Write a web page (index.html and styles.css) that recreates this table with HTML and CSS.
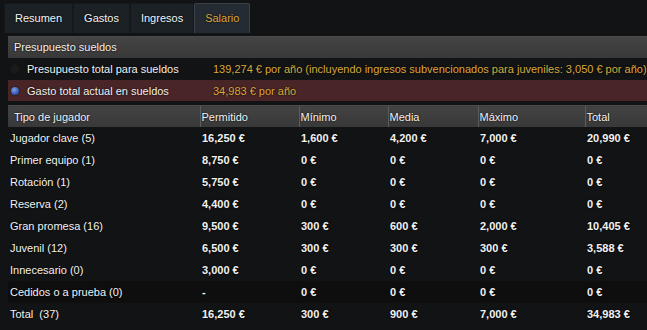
FILE: index.html
```html
<!DOCTYPE html>
<html lang="es">
<head>
<meta charset="utf-8">
<link rel="stylesheet" href="styles.css">
</head>
<body>
<div class="tabs">
  <div class="tab">Resumen</div>
  <div class="tab">Gastos</div>
  <div class="tab">Ingresos</div>
  <div class="tab active">Salario</div>
</div>
<div class="content">
  <div class="panel-head">Presupuesto sueldos</div>
  <div class="info-row">
    <span class="dot off"></span>
    <span class="label">Presupuesto total para sueldos</span>
    <span class="value">139,274 € por año (incluyendo ingresos subvencionados para juveniles: 3,050 € por año)</span>
  </div>
  <div class="info-row warn">
    <span class="dot on"></span>
    <span class="label">Gasto total actual en sueldos</span>
    <span class="value">34,983 € por año</span>
  </div>
  <table class="grid">
    <colgroup>
      <col class="c1"><col class="c2"><col class="c3"><col class="c4"><col class="c5"><col class="c6">
    </colgroup>
    <thead>
      <tr><th class="first">Tipo de jugador</th><th>Permitido</th><th>Mínimo</th><th>Media</th><th>Máximo</th><th>Total</th></tr>
    </thead>
    <tbody>
      <tr><td>Jugador clave (5)</td><td class="n">16,250 €</td><td class="n">1,600 €</td><td class="n">4,200 €</td><td class="n">7,000 €</td><td class="n">20,990 €</td></tr>
      <tr><td>Primer equipo (1)</td><td class="n">8,750 €</td><td class="n">0 €</td><td class="n">0 €</td><td class="n">0 €</td><td class="n">0 €</td></tr>
      <tr><td>Rotación (1)</td><td class="n">5,750 €</td><td class="n">0 €</td><td class="n">0 €</td><td class="n">0 €</td><td class="n">0 €</td></tr>
      <tr><td>Reserva (2)</td><td class="n">4,400 €</td><td class="n">0 €</td><td class="n">0 €</td><td class="n">0 €</td><td class="n">0 €</td></tr>
      <tr><td>Gran promesa (16)</td><td class="n">9,500 €</td><td class="n">300 €</td><td class="n">600 €</td><td class="n">2,000 €</td><td class="n">10,405 €</td></tr>
      <tr><td>Juvenil (12)</td><td class="n">6,500 €</td><td class="n">300 €</td><td class="n">300 €</td><td class="n">300 €</td><td class="n">3,588 €</td></tr>
      <tr><td>Innecesario (0)</td><td class="n">3,000 €</td><td class="n">0 €</td><td class="n">0 €</td><td class="n">0 €</td><td class="n">0 €</td></tr>
      <tr class="dark"><td>Cedidos o a prueba (0)</td><td class="n">-</td><td class="n">0 €</td><td class="n">0 €</td><td class="n">0 €</td><td class="n">0 €</td></tr>
      <tr><td>Total &nbsp;(37)</td><td class="n">16,250 €</td><td class="n">300 €</td><td class="n">900 €</td><td class="n">7,000 €</td><td class="n">34,983 €</td></tr>
    </tbody>
  </table>
</div>
</body>
</html>
```

FILE: styles.css
```css
html, body {
  margin: 0;
  padding: 0;
  background: #121314;
  overflow: hidden;
}
body {
  font-family: "Liberation Sans", Arial, sans-serif;
  font-size: 11px;
  color: #f2f2f2;
  text-shadow: 0 0 2px #000;
}
.tabs {
  display: flex;
  padding: 3px 0 0 4px;
  box-sizing: border-box;
  height: 33px;
}
.tab {
  background: #1c2126;
  border: 1px solid #15191c;
  border-bottom: none;
  border-radius: 2px 2px 0 0;
  padding: 0 10px;
  line-height: 29px;
  font-size: 11px;
  color: #f4f4f4;
}
.tab.active {
  background: #242b32;
  border-color: #3a4148;
  color: #d9aa3c;
}
.content {
  padding: 3px 0 0 8px;
}
.panel-head {
  background: linear-gradient(#444, #393939);
  border-top: 1px solid #4a4a4a;
  height: 21px;
  line-height: 21px;
  padding-left: 6px;
  font-size: 11px;
}
.info-row {
  display: flex;
  align-items: center;
  height: 22px;
  white-space: nowrap;
}
.info-row.warn {
  background: #4a2527;
  height: 21px;
}
.dot {
  width: 8px;
  height: 8px;
  border-radius: 50%;
  margin: 0 8px 0 3px;
  flex: none;
}
.dot.off {
  background: #1a1a1a;
  box-shadow: 0 0 2px #222;
}
.dot.on {
  background: radial-gradient(circle at 40% 35%, #7fa0e8, #2b4fa8 70%);
  box-shadow: 0 0 2px #111;
}
.label {
  width: 186px;
  flex: none;
}
.value {
  color: #d9aa3c;
}
.grid {
  margin-top: 4px;
  border-collapse: collapse;
  table-layout: fixed;
  width: 660px;
}
.c1 { width: 192px; }
.c2 { width: 99px; }
.c3 { width: 89px; }
.c4 { width: 90px; }
.c5 { width: 107px; }
.c6 { width: 83px; }
.grid th {
  background: linear-gradient(#434343, #383838);
  border-left: 1px solid #5c5c5c;
  font-weight: normal;
  text-align: left;
  height: 21px;
  padding: 0 0 0 1px;
  border-top: 1px solid #4a4a4a;
}
.grid th.first {
  border-left: none;
  padding-left: 6px;
}
.grid td {
  height: 22px;
  padding: 0 0 0 1px;
  white-space: nowrap;
}
.grid td:first-child {
  padding-left: 2px;
}
.grid td.n {
  font-weight: bold;
  padding-left: 2px;
}
.grid tr.dark td {
  background: #0e0e0f;
}
```
